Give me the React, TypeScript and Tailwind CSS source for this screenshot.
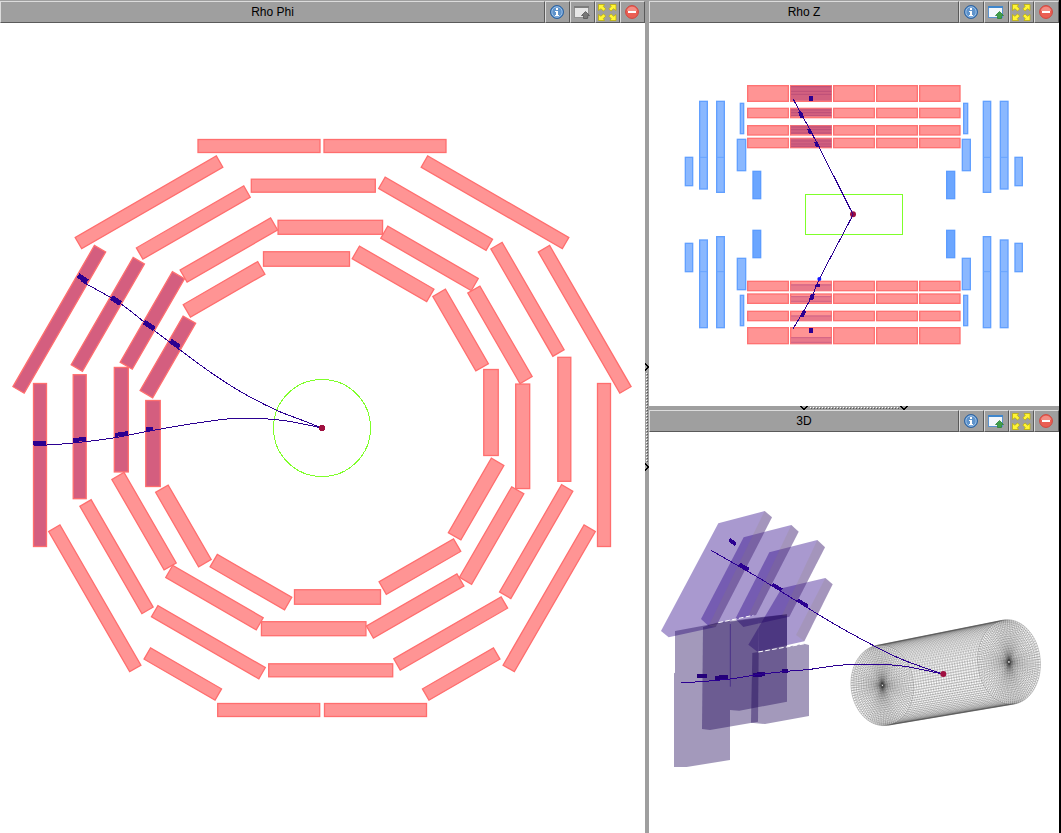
import React from "react";

type Pt = [number, number];
type Box = [number, number, number, number];

const INK = "#2b0091";

/** Smooth path through a list of points (Catmull-Rom converted to Béziers). */
function smooth(p: Pt[]): string {
  let d = `M${p[0][0]} ${p[0][1]}`;
  for (let i = 0; i < p.length - 1; i++) {
    const a = p[Math.max(i - 1, 0)];
    const b = p[i];
    const c = p[i + 1];
    const e = p[Math.min(i + 2, p.length - 1)];
    d += `C${b[0] + (c[0] - a[0]) / 6} ${b[1] + (c[1] - a[1]) / 6} ${c[0] - (e[0] - b[0]) / 6} ${c[1] - (e[1] - b[1]) / 6} ${c[0]} ${c[1]}`;
  }
  return d;
}

function Track({ points, width }: { points: Pt[]; width: number }) {
  return <path d={smooth(points)} fill="none" stroke={INK} strokeWidth={width} />;
}

/* ---------- toolbar icons ---------- */

function InfoIcon() {
  return (
    <svg width="16" height="16" viewBox="0 0 16 16" aria-hidden="true">
      <circle cx="8" cy="8" r="6.5" fill="#3f7fc4" stroke="#2f639f" />
      <circle cx="8" cy="8" r="5.2" fill="#5f93cb" stroke="#a9c8ea" strokeWidth="0.9" />
      <path d="M7 4h2v2H7zM6 7h3v4h1v1H6v-1h1V8H6z" fill="#fff" />
    </svg>
  );
}

function WindowIcon({ muted }: { muted: boolean }) {
  return (
    <svg width="16" height="16" viewBox="0 0 16 16" aria-hidden="true">
      <rect x="0.5" y="2.5" width="14" height="11" fill={muted ? "#e6e6e6" : "#f4f8fc"} stroke={muted ? "#909090" : "#5b93cf"} />
      <rect x="0" y="2" width="15" height="2" fill={muted ? "#7d7d7d" : "#3f86cc"} />
      <path
        d="M11.5 7.5 15.5 11.5H13.5V14.5H9.5V11.5H7.5Z"
        fill={muted ? "#777" : "#3f9f4b"}
        stroke={muted ? "#555" : "#2b8237"}
        strokeWidth="0.8"
      />
    </svg>
  );
}

function ExpandIcon() {
  const arrow = "M0 0H6L4.8 1.9 7.2 4.4 5 6.6 2.4 4.2 0 6Z";
  return (
    <svg width="19" height="17" viewBox="0 0 19 17" aria-hidden="true">
      <g fill="#fff535" stroke="#b8aa00" strokeWidth="0.7">
        <path d={arrow} transform="translate(0.5 0.5)" />
        <path d={arrow} transform="translate(18 0.5) scale(-1 1)" />
        <path d={arrow} transform="translate(0.5 16.5) scale(1 -1)" />
        <path d={arrow} transform="translate(18 16.5) scale(-1 -1)" />
      </g>
    </svg>
  );
}

function CloseIcon() {
  return (
    <svg width="16" height="16" viewBox="0 0 16 16" aria-hidden="true">
      <circle cx="8" cy="8" r="6.4" fill="#ea5f54" stroke="#d2463d" />
      <path d="M3 7a5 4.2 0 0 1 10 0z" fill="#f28d84" />
      <rect x="4" y="7" width="8" height="2" fill="#fff" />
    </svg>
  );
}

/* ---------- frame parts ---------- */

function ToolButton({ label, children }: { label: string; children: React.ReactNode }) {
  return (
    <button
      type="button"
      aria-label={label}
      className="flex w-[25px] shrink-0 items-center justify-center border-t border-r border-b border-l border-t-[#dcdcdc] border-r-[#5a5a5a] border-b-[#5a5a5a] border-l-[#dcdcdc] pr-px"
    >
      {children}
    </button>
  );
}

function Panel({
  title,
  muted = false,
  className,
  children,
}: {
  title: string;
  muted?: boolean;
  className: string;
  children: React.ReactNode;
}) {
  return (
    <section className={`flex min-h-0 min-w-0 flex-col bg-white ${className}`}>
      <header className="flex h-[22px] shrink-0 bg-[#9f9f9f]">
        <h2 className="flex flex-1 items-center justify-center border border-t-[#dcdcdc] border-r-[#5a5a5a] border-b-[#5a5a5a] border-l-[#dcdcdc] text-[12px] leading-[16px] text-black">
          {title}
        </h2>
        <ToolButton label="Information"><InfoIcon /></ToolButton>
        <ToolButton label="Undock window"><WindowIcon muted={muted} /></ToolButton>
        <ToolButton label="Maximise"><ExpandIcon /></ToolButton>
        <ToolButton label="Close"><CloseIcon /></ToolButton>
      </header>
      <div className="min-h-0 flex-1">{children}</div>
    </section>
  );
}

function Splitter({ vertical = false }: { vertical?: boolean }) {
  const dots = Array.from({ length: 30 }, (_, i) => i);
  return (
    <div
      role="separator"
      aria-orientation={vertical ? "vertical" : "horizontal"}
      className={`flex shrink-0 items-center justify-center bg-[#9f9f9f] ${vertical ? "w-1 flex-col" : "h-1"}`}
    >
      <svg
        width={vertical ? 4 : 108}
        height={vertical ? 108 : 4}
        viewBox={vertical ? "0 0 4 108" : "0 0 108 4"}
        shapeRendering="crispEdges"
        aria-hidden="true"
      >
        <g transform={vertical ? "matrix(0 1 1 0 0 0)" : undefined}>
          {[0, 100].map((x) => (
            <path key={x} d={`M${x} 0h2v1h1v1h2v-1h1v-1h2v1h-1v1h-1v1h-1v1h-2v-1h-1v-1h-1v-1h-1z`} fill="#000" />
          ))}
          {dots.map((i) => (
            <g key={i}>
              <rect x={10 + i * 3} y="1" width="1" height="1" fill="#fff" />
              <rect x={11 + i * 3} y="2" width="1" height="1" fill="#555" />
            </g>
          ))}
        </g>
      </svg>
    </div>
  );
}

/* ---------- Rho Phi ---------- */

interface Chamber {
  x: number;
  y: number;
  length: number;
  depth: number;
  angle: number;
  hit?: boolean;
}

const CX = 322;
const CY = 428;

const rings = [
  { dx: -8.7, dy: -242.3, length: 124, depth: 13 },
  { dx: 8.3, dy: -200.7, length: 104.5, depth: 14 },
  { dx: -15.5, dy: -169, length: 86, depth: 14.5 },
];

const innerChambers: Chamber[] = rings.flatMap((r) =>
  Array.from({ length: 12 }, (_, i) => {
    const angle = i * 30;
    const a = (angle * Math.PI) / 180;
    return {
      x: CX + r.dx * Math.cos(a) - r.dy * Math.sin(a),
      y: CY + r.dx * Math.sin(a) + r.dy * Math.cos(a),
      length: r.length,
      depth: r.depth,
      angle,
      hit: i === 9 || i === 10,
    };
  }),
);

const outerChambers: Chamber[] = [
  { x: 259, y: 146, length: 122, depth: 13, angle: 0 },
  { x: 385, y: 146, length: 122, depth: 13, angle: 0 },
  { x: 149, y: 202.3, length: 163, depth: 13, angle: -30 },
  { x: 495, y: 202.3, length: 163, depth: 13, angle: 30 },
  { x: 59.3, y: 319.3, length: 163, depth: 13, angle: -60, hit: true },
  { x: 584.7, y: 319.3, length: 163, depth: 13, angle: 60 },
  { x: 40, y: 465, length: 163, depth: 13, angle: 90, hit: true },
  { x: 604, y: 465, length: 163, depth: 13, angle: 90 },
  { x: 94.8, y: 598.3, length: 162, depth: 13, angle: 60 },
  { x: 549.2, y: 598.3, length: 162, depth: 13, angle: -60 },
  { x: 182.8, y: 674, length: 82, depth: 13, angle: 30 },
  { x: 461.2, y: 674, length: 82, depth: 13, angle: -30 },
  { x: 268.7, y: 710, length: 102, depth: 13, angle: 0 },
  { x: 375.5, y: 710, length: 102, depth: 13, angle: 0 },
];

const phiHits: Box[] = [
  [78, 275.5, 87.5, 281.5],
  [111.5, 297.5, 120.5, 303.5],
  [144, 322, 154.5, 329],
  [170.5, 341, 179.5, 347],
  [33, 443.5, 46, 443],
  [73, 440, 86, 439],
  [115, 435, 128, 433],
  [146, 429.5, 153, 428.5],
];

function RhoPhiView() {
  return (
    <svg className="block h-full w-full" viewBox="0 23 645 810" role="img" aria-label="Rho Phi projection">
      {[...innerChambers, ...outerChambers].map((c, i) => (
        <rect
          key={i}
          x={-c.length / 2}
          y={-c.depth / 2}
          width={c.length}
          height={c.depth}
          transform={`translate(${c.x} ${c.y}) rotate(${c.angle})`}
          fill={c.hit ? "#d45e7f" : "#ff9494"}
          stroke="#ff6e6e"
          strokeWidth="1.3"
        />
      ))}
      <g shapeRendering="crispEdges">
        <circle cx={CX} cy={CY} r="48.5" fill="none" stroke="#7fff2a" />
        {phiHits.map(([x1, y1, x2, y2], i) => (
          <line key={i} x1={x1} y1={y1} x2={x2} y2={y2} stroke={INK} strokeWidth={i < 4 ? 5 : 4} />
        ))}
        <Track width={1} points={[[81, 281], [121, 304], [155, 331], [180, 350], [213, 374], [243, 393], [277, 410.5], [299, 419], [322, 428]]} />
        <Track width={1} points={[[34, 445], [47, 445], [73, 443], [113, 438], [147, 431.5], [187, 424.5], [230, 418.7], [257, 418.3], [287, 421], [322, 428]]} />
        <circle cx={CX} cy={CY} r="3" fill="#a01040" />
      </g>
    </svg>
  );
}

/* ---------- Rho Z (three drawing units per pixel) ---------- */

const columns: Pt[] = [[233, 355], [362, 484], [491, 613], [620, 742], [749, 870]];
const barrelRows: Pt[] = [[32, 79], [100, 128], [152, 180], [190, 218], [619, 647], [657, 685], [709, 737], [758, 806]];

const endcapShapes: Box[] = [
  [46, 247, 68, 332],
  [89, 79, 112, 342],
  [140, 79, 163, 352],
  [211, 85, 221, 176],
  [202, 193, 227, 287],
  [877, 193, 901, 287],
  [881, 85, 893, 176],
  [940, 79, 962, 352],
  [991, 79, 1014, 342],
  [1035, 247, 1057, 332],
];
const endcapSolid: Box[] = [[249, 289, 272, 371], [830, 289, 854, 371]];
const mirror = ([x1, y1, x2, y2]: Box): Box => [x1, 837 - y2, x2, 837 - y1];

const shadows: Box[] = [
  [362, 33, 484, 77],
  [362, 101, 484, 124],
  [362, 152, 484, 177],
  [362, 191, 484, 217],
  [362, 627, 484, 647],
  [362, 663, 484, 683],
  [362, 721, 484, 737],
  [362, 786, 484, 806],
];
const shadowLines = [35, 49, 58, 105, 113, 122, 156, 164, 174, 198, 207, 214, 630, 665, 679, 723, 788, 802];

function Boxes({ boxes, fill, stroke }: { boxes: Box[]; fill: string; stroke: string }) {
  return (
    <>
      {boxes.map(([x1, y1, x2, y2], i) => (
        <rect key={i} x={x1} y={y1} width={x2 - x1} height={y2 - y1} fill={fill} stroke={stroke} strokeWidth="4" />
      ))}
    </>
  );
}

function RhoZView() {
  const barrel: Box[] = barrelRows.flatMap(([y1, y2]) => columns.map(([x1, x2]): Box => [x1, y1, x2, y2]));
  return (
    <svg className="block h-full w-full" viewBox="-63 -156 1230 1149" role="img" aria-label="Rho Z projection">
      <Boxes boxes={barrel} fill="#ff9494" stroke="#ff7272" />
      {shadows.map(([x1, y1, x2, y2], i) => (
        <rect key={i} x={x1} y={y1} width={x2 - x1} height={y2 - y1} fill={i < 4 ? "#d2607f" : "#e8798b"} />
      ))}
      {shadowLines.map((y) => (
        <line key={y} x1="363" x2="484" y1={y} y2={y} stroke={y < 400 ? "#b84a77" : "#cd6084"} strokeWidth="2.5" />
      ))}
      <Boxes boxes={[...endcapShapes, ...endcapShapes.map(mirror)]} fill="#8ab8ff" stroke="#62a0ff" />
      <Boxes boxes={[...endcapSolid, ...endcapSolid.map(mirror)]} fill="#6ba6ff" stroke="#5c9cff" />
      {[88, 139, 939, 990].map((x) => (
        <path key={x} d={`M${x} 247h24M${x} 590h24`} stroke="#68a4ff" strokeWidth="3" />
      ))}
      <g shapeRendering="crispEdges">
        <rect x="407" y="358" width="290" height="120" fill="none" stroke="#7fff2a" strokeWidth="3" />
        <Track width={3} points={[[370, 73], [400, 128], [445, 212], [549, 418]]} />
        <Track width={3} points={[[368, 763], [398, 713], [428, 660], [448, 612], [541, 435], [549, 418]]} />
        <g fill={INK}>
          <rect x="417" y="63" width="12" height="14" />
          <rect x="417" y="759" width="12" height="14" />
          <path d="M384 111h12l8 19h-12zM411 162h11l6 15h-11zM432 202h11l6 13h-11z" />
          <path d="M437 627h12v9h-14zM422 657h12l-4 18h-13zM397 708h13l-9 17h-12z" />
        </g>
      </g>
      <circle cx="448" cy="612" r="6" fill="#1414ff" />
      <circle cx="549" cy="418" r="9" fill="#a01040" />
      <path d="M543 406l6 12-6 12" fill="none" stroke={INK} strokeWidth="3" />
    </svg>
  );
}

/* ---------- 3D (three drawing units per pixel) ---------- */

const upperSlabs = [
  "205,70 344,33 366,52 197,381 56,412 33,393",
  "281,112 424,75 446,95 318,345 175,377 153,357",
  "358,157 502,120 525,142 418,350 280,381 256,356",
  "395,265 526,234 548,253 463,424 322,455 295,434",
];
const lowerSlabs = [
  "75,393 240,362 240,780 110,801 72,801 72,520 75,518",
  "159,381 200,368 327,352 324,665 180,690 156,687",
  "240,365 411,343 411,605 268,632 240,630",
  "327,352 411,343 411,440 327,455",
  "307,459 462,431 477,435 477,648 345,672 303,668",
];
const slabSides = [
  "344,33 366,52 197,381 176,377",
  "424,75 446,95 318,345 296,345",
  "502,120 525,142 418,350 396,346",
  "526,234 548,253 463,424 438,405",
];

const tau = Math.PI * 2;
const tilt = (-5 * Math.PI) / 180;

/** Point on the cylinder: t runs from the left cap to the right cap. */
function onCylinder(t: number, angle: number, r = 1): Pt {
  const x = 94 * r * Math.cos(angle);
  const y = (121 + 6 * t) * r * Math.sin(angle);
  return [
    697 + 380 * t + x * Math.cos(tilt) - y * Math.sin(tilt),
    556 - 70 * t + x * Math.sin(tilt) + y * Math.cos(tilt),
  ];
}

const fmt = ([x, y]: Pt) => `${x.toFixed(1)} ${y.toFixed(1)}`;

function loop(t: number, r: number) {
  return "M" + Array.from({ length: 60 }, (_, i) => fmt(onCylinder(t, (i / 60) * tau, r))).join("L") + "Z";
}

const SPOKES = 96;
const sideLines = Array.from({ length: SPOKES }, (_, i) => {
  const a = (i / SPOKES) * tau;
  return `M${fmt(onCylinder(0, a))}L${fmt(onCylinder(1, a))}`;
}).join("");
const spokes = [0, 1]
  .flatMap((t) =>
    Array.from({ length: SPOKES }, (_, i) => {
      const a = (i / SPOKES) * tau;
      return `M${fmt(onCylinder(t, a, 0.03))}L${fmt(onCylinder(t, a))}`;
    }),
  )
  .join("");
const hoops = Array.from({ length: 51 }, (_, i) => loop(i / 50, 1)).join("");
const capRings = [0, 1].flatMap((t) => Array.from({ length: 18 }, (_, i) => loop(t, (i + 1) / 18))).join("");

function ThreeDView() {
  return (
    <svg className="block h-full w-full" viewBox="-3 -204 1230 1203" role="img" aria-label="3D view">
      <g fill="#290088" fillOpacity="0.4">
        {upperSlabs.map((p) => <polygon key={p} points={p} />)}
      </g>
      <g fill="#190055" fillOpacity="0.4">
        {lowerSlabs.map((p) => <polygon key={p} points={p} />)}
      </g>
      <g fill="#8c8060" fillOpacity="0.16">
        {slabSides.map((p) => <polygon key={p} points={p} />)}
      </g>
      <path d="M241 372V560" stroke="#4b3387" strokeWidth="3" />
      <path d="M205 368l105-22M325 456l140-25" stroke="#fff" strokeWidth="3" strokeDasharray="14 7" />
      <g fill="none" stroke="#333" strokeOpacity="0.5">
        <path d={sideLines} strokeWidth="1" />
        <path d={spokes} strokeWidth="1.4" />
        <path d={hoops} strokeWidth="0.8" />
        <path d={capRings} strokeWidth="0.8" />
      </g>
      <g shapeRendering="crispEdges">
        <g stroke={INK} strokeWidth="11">
          <path d="M238 119l19 14M268 193l28 16M367 253l28 17M443 300l30 19" />
        </g>
        <g fill="#24007a">
          <rect x="141" y="522" width="30" height="12" />
          <path d="M195 528h12v-3h27v12h-9v4h-30zM309 519h12v-3h24v11h-10v3h-26z" />
          <rect x="396" y="507" width="18" height="11" />
        </g>
        <Track width={3} points={[[183, 151], [300, 218], [370, 260], [480, 328], [570, 382], [700, 452], [770, 484], [878, 522]]} />
        <Track width={3} points={[[93, 548], [150, 545], [240, 537], [330, 523], [410, 514], [480, 508], [550, 498], [612, 493], [695, 493], [770, 500], [878, 522]]} />
      </g>
      <circle cx="880" cy="522" r="9" fill="#a01040" />
    </svg>
  );
}

export default function App() {
  return (
    <main className="flex h-screen border-r-2 border-black bg-[#9f9f9f] pt-px font-['Liberation_Sans',Arial,sans-serif]">
      <Panel title="Rho Phi" muted className="flex-[645]">
        <RhoPhiView />
      </Panel>
      <Splitter vertical />
      <div className="flex min-w-0 flex-[410] flex-col">
        <Panel title="Rho Z" className="flex-[405]">
          <RhoZView />
        </Panel>
        <Splitter />
        <Panel title="3D" className="flex-[423]">
          <ThreeDView />
        </Panel>
      </div>
    </main>
  );
}
